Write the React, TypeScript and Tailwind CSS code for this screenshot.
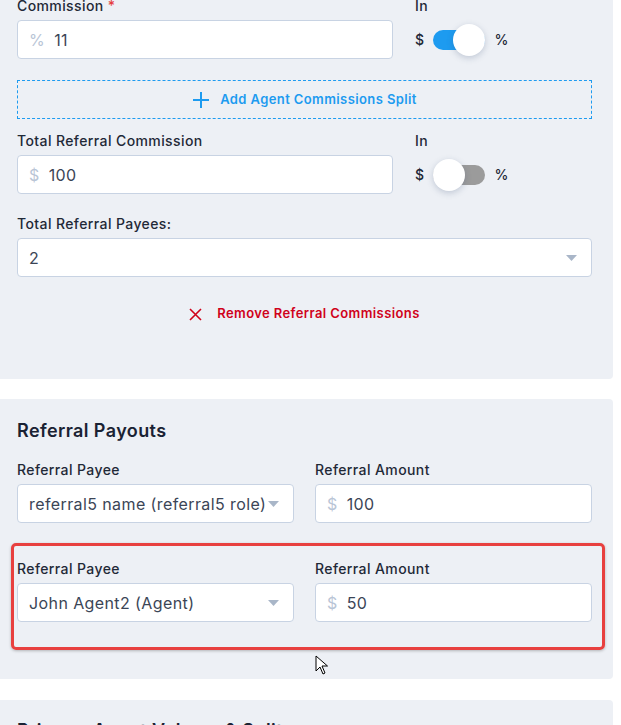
import React from "react";

const labelCls = "mb-[4px] block text-[14px] leading-5 font-medium text-[#1f2937]";
const boxCls =
  "flex h-[39px] items-center rounded-[4px] border border-[#c8d3e3] bg-white px-[11px] text-[16px] text-[#3b4556]";

function Caret() {
  return (
    <svg width="11" height="6" viewBox="0 0 11 6" className="ml-auto shrink-0">
      <path d="M0 0h11L5.5 6z" fill="#a9b6c8" />
    </svg>
  );
}

function MoneyInput({ prefix, value }: { prefix: string; value: string }) {
  return (
    <div className={boxCls}>
      <span className="mr-[9px] text-[#b9c5d6]">{prefix}</span>
      <span>{value}</span>
    </div>
  );
}

function Select({ value }: { value: string }) {
  return (
    <div className={`${boxCls} pr-[14px]`}>
      <span className="truncate">{value}</span>
      <Caret />
    </div>
  );
}

function Toggle({ on }: { on: boolean }) {
  return (
    <div className="flex items-center gap-[9px] text-[14px] font-medium text-[#1f2937]">
      <span>$</span>
      <div className={`flex h-[20px] w-[52px] items-center rounded-full ${on ? "justify-end bg-[#1d9bf0]" : "justify-start bg-[#9b9b9b]"}`}>
        <div className="size-[32px] rounded-full bg-white shadow-[0_2px_6px_rgba(60,80,120,0.25)]" />
      </div>
      <span>%</span>
    </div>
  );
}

function AmountRow({ label, prefix, value, on }: { label: React.ReactNode; prefix: string; value: string; on: boolean }) {
  return (
    <div className="grid grid-cols-[376px_1fr] gap-x-[22px]">
      <div>
        <label className={labelCls}>{label}</label>
        <MoneyInput prefix={prefix} value={value} />
      </div>
      <div>
        <label className={labelCls}>In</label>
        <div className="flex h-[39px] items-center">
          <Toggle on={on} />
        </div>
      </div>
    </div>
  );
}

function PayoutRow({ payee, amount }: { payee: string; amount: string }) {
  return (
    <div className="grid grid-cols-[277px_277px] gap-x-[21px]">
      <div>
        <label className={labelCls}>Referral Payee</label>
        <Select value={payee} />
      </div>
      <div>
        <label className={labelCls}>Referral Amount</label>
        <MoneyInput prefix="$" value={amount} />
      </div>
    </div>
  );
}

export default function App() {
  return (
    <div className="relative h-[725px] overflow-hidden bg-white font-['Inter',sans-serif] tracking-[0.4px]">
      <div className="-mt-[4px] w-[613px] rounded-br-[4px] bg-[#edf0f5] pr-[21px] pb-[55px] pl-[17px]">
        <AmountRow
          label={
            <>
              Commission <span className="text-[#e53e3e]">*</span>
            </>
          }
          prefix="%"
          value="11"
          on
        />
        <div className="mt-[21px] flex h-[39px] items-center justify-center gap-[10px] border border-dashed border-[#1d9bf0] text-[13px] font-semibold text-[#1d9bf0]">
          <svg width="18" height="18" viewBox="0 0 18 18">
            <path d="M9 1v16M1 9h16" stroke="#1d9bf0" strokeWidth="2" />
          </svg>
          Add Agent Commissions Split
        </div>
        <div className="mt-[12px]">
          <AmountRow label="Total Referral Commission" prefix="$" value="100" on={false} />
        </div>
        <div className="mt-[20px]">
          <label className={labelCls}>Total Referral Payees:</label>
          <Select value="2" />
        </div>
        <div className="mt-[27px] flex h-5 items-center justify-center gap-[15px] text-[13px] font-semibold text-[#d0021b]">
          <svg width="13" height="13" viewBox="0 0 13 13">
            <path d="M1 1l11 11M12 1L1 12" stroke="#d0021b" strokeWidth="1.6" />
          </svg>
          Remove Referral Commissions
        </div>
      </div>

      <div className="mt-[20px] w-[613px] rounded-r-[4px] bg-[#edf0f5] pt-[18px] pr-[21px] pb-[29px] pl-[17px]">
        <h2 className="text-[18px] leading-7 font-semibold text-[#1a2233]">Referral Payouts</h2>
        <div className="mt-[15px]">
          <PayoutRow payee="referral5 name (referral5 role)" amount="100" />
        </div>
        <div className="mt-[20px] -ml-[6px] w-[594px] rounded-[5px] border-[3px] border-[#e8403f] pt-[13px] pb-[25px] pl-[3px] shadow-[0_1px_3px_rgba(0,0,0,0.25)]">
          <PayoutRow payee="John Agent2 (Agent)" amount="50" />
        </div>
      </div>

      <div className="mt-[21px] w-[613px] rounded-r-[4px] bg-[#edf0f5] pt-[17px] pl-[17px]">
        <h2 className="text-[18px] leading-7 font-semibold text-[#1a2233]">Primary Agent Volume &amp; Split</h2>
      </div>

      <svg className="absolute top-[655px] left-[315px]" width="14" height="20" viewBox="0 0 14 20">
        <path d="M1 1v15l4-4 3 7 2-1-3-7h5.5z" fill="white" stroke="black" strokeWidth="1" strokeLinejoin="round" />
      </svg>
    </div>
  );
}
